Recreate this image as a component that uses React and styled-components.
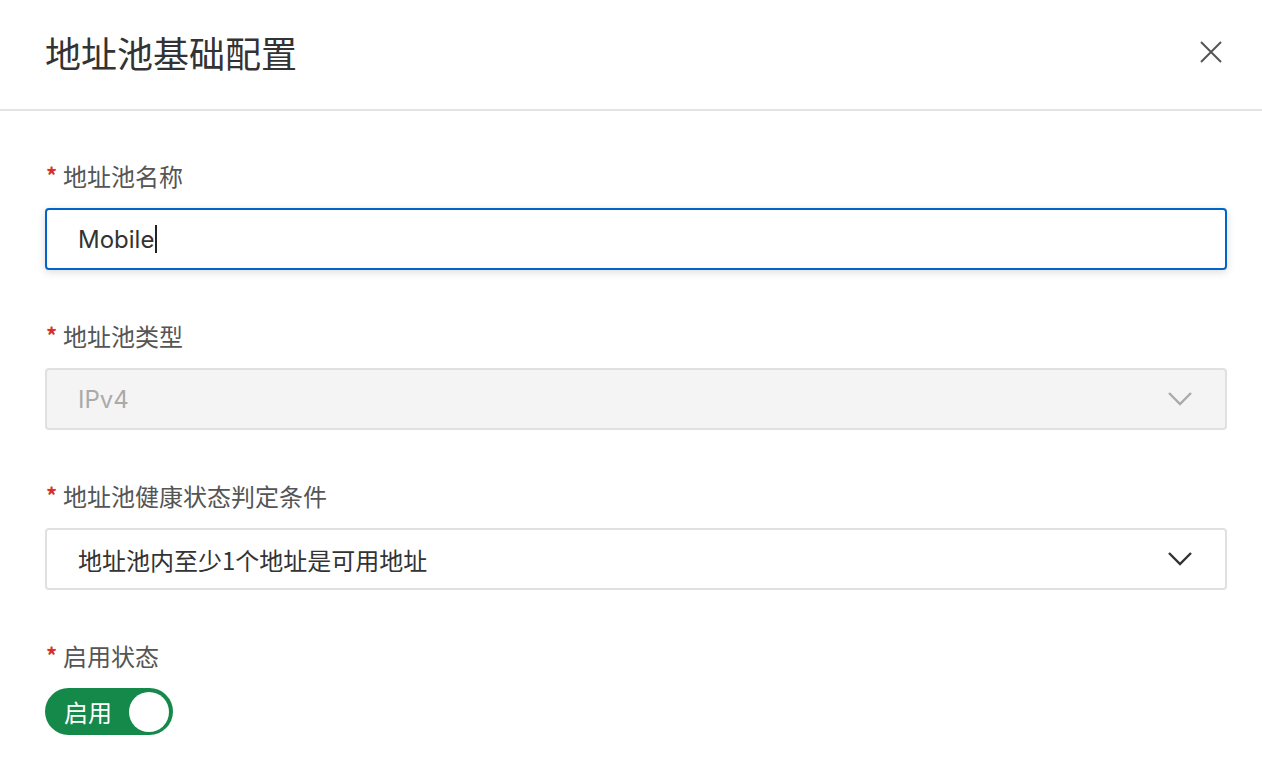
import React from "react";
import styled, { createGlobalStyle } from "styled-components";

const Global = createGlobalStyle`
  html, body { margin: 0; padding: 0; background: #fff; }
  body { font-family: "Noto Sans CJK SC", "Noto Sans", sans-serif; }
  * { box-sizing: border-box; }
`;

const Dialog = styled.div`
  width: 1262px;
  height: 782px;
  background: #fff;
  display: flex;
  flex-direction: column;
`;

const Header = styled.div`
  height: 111px;
  flex-shrink: 0;
  display: flex;
  align-items: center;
  justify-content: space-between;
  padding: 0 38px 6px 45px;
  border-bottom: 2px solid #e3e3e3;
`;

const Title = styled.h1`
  margin: 0;
  font-size: 36px;
  font-weight: 400;
  color: #333;
  line-height: 1;
`;

const CloseButton = styled.button`
  width: 26px;
  height: 26px;
  padding: 0;
  border: 0;
  background: none;
  display: flex;
  align-items: center;
  justify-content: center;
  cursor: pointer;
`;

const Body = styled.div`
  padding: 48px 35px 0 45px;
  display: flex;
  flex-direction: column;
  gap: 49px;
`;

const Item = styled.div`
  display: flex;
  flex-direction: column;
  gap: 15px;
`;

const Label = styled.div`
  height: 34px;
  display: flex;
  align-items: center;
  font-size: 24px;
  color: #555;
  line-height: 34px;
`;

const Required = styled.span`
  width: 18px;
  color: #d93026;
  font-size: 22px;
  font-weight: 700;
  align-self: flex-start;
  line-height: 30px;
  padding-left: 1px;
`;

const Field = styled.div`
  height: 62px;
  display: flex;
  align-items: center;
  justify-content: space-between;
  padding: 0 32px 0 31px;
  border-radius: 4px;
  font-size: 24px;
  border: ${(p) => (p.$focused ? "2px solid #0064c8" : "2px solid #e0e0e0")};
  background: ${(p) => (p.$disabled ? "#f4f4f4" : "#fff")};
  color: ${(p) => (p.$disabled ? "#aaa" : "#333")};
  box-shadow: ${(p) => (p.$focused ? "0 2px 8px rgba(0,0,0,0.14)" : "none")};
`;

const InputText = styled.span`
  display: flex;
  align-items: center;
  font-family: "Inter", "Noto Sans CJK SC", sans-serif;
`;

const Caret = styled.span`
  display: inline-block;
  width: 2px;
  height: 28px;
  background: #222;
  margin-left: 1px;
`;

const Switch = styled.div`
  width: 128px;
  height: 47px;
  border-radius: 24px;
  background: #15894a;
  display: flex;
  align-items: center;
  justify-content: space-between;
  padding: 0 4px 0 19px;
`;

const SwitchText = styled.span`
  color: #fff;
  font-size: 24px;
`;

const Knob = styled.span`
  width: 40px;
  height: 40px;
  border-radius: 50%;
  background: #fff;
`;

const Chevron = ({ color }) => (
  <svg width="26" height="16" viewBox="0 0 26 16">
    <path d="M2 2 L13 13 L24 2" fill="none" stroke={color} strokeWidth="2.4" />
  </svg>
);

export default function App() {
  return (
    <Dialog>
      <Global />
      <Header>
        <Title>地址池基础配置</Title>
        <CloseButton aria-label="close">
          <svg width="22" height="22" viewBox="0 0 22 22">
            <path d="M1 1 L21 21 M21 1 L1 21" stroke="#555" strokeWidth="2" />
          </svg>
        </CloseButton>
      </Header>
      <Body>
        <Item>
          <Label>
            <Required>*</Required>地址池名称
          </Label>
          <Field $focused>
            <InputText>
              Mobile
              <Caret />
            </InputText>
          </Field>
        </Item>
        <Item>
          <Label>
            <Required>*</Required>地址池类型
          </Label>
          <Field $disabled>
            <InputText>IPv4</InputText>
            <Chevron color="#aaa" />
          </Field>
        </Item>
        <Item>
          <Label>
            <Required>*</Required>地址池健康状态判定条件
          </Label>
          <Field>
            <span>地址池内至少1个地址是可用地址</span>
            <Chevron color="#333" />
          </Field>
        </Item>
        <Item>
          <Label>
            <Required>*</Required>启用状态
          </Label>
          <Switch>
            <SwitchText>启用</SwitchText>
            <Knob />
          </Switch>
        </Item>
      </Body>
    </Dialog>
  );
}
